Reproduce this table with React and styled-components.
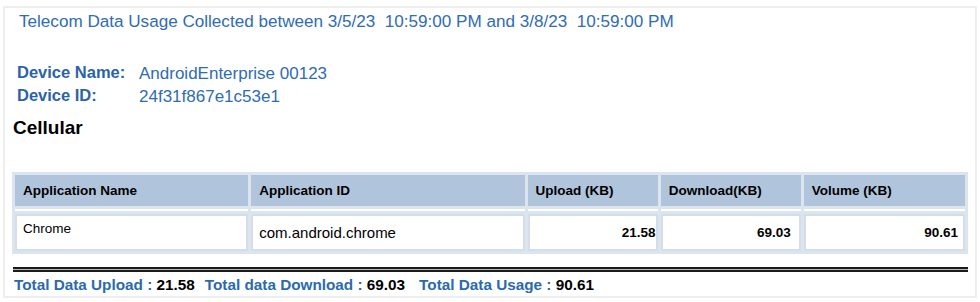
import React from "react";
import styled, { createGlobalStyle } from "styled-components";

const GlobalStyle = createGlobalStyle`
  body {
    margin: 0;
    background: #ffffff;
    font-family: "Liberation Sans", Arial, sans-serif;
  }
`;

const Frame = styled.div`
  margin: 6px 0 0 3px;
  width: 970px;
  height: 288px;
  border: 2px solid #eeeeee;
  display: flex;
  flex-direction: column;
`;

const Title = styled.div`
  padding: 4px 0 0 14px;
  font-size: 17.1px;
  line-height: 20px;
  color: #2e6cb3;
  white-space: pre;
`;

const InfoGrid = styled.div`
  margin: 30px 0 0 12px;
  display: grid;
  grid-template-columns: 122px auto;
  row-gap: 1px;
`;

const Label = styled.div`
  padding-bottom: 2px;
  font-size: 16.5px;
  font-weight: bold;
  line-height: 20px;
  color: #2b63a8;
`;

const Value = styled.div`
  padding-top: 2px;
  font-size: 17px;
  line-height: 20px;
  color: #2e6cb3;
`;

const Section = styled.div`
  margin: 10px 0 0 8px;
  font-size: 19px;
  font-weight: bold;
  line-height: 22px;
  color: #000000;
`;

const Table = styled.table`
  margin: 33px 0 0 7px;
  width: 956px;
  border-collapse: separate;
  border-spacing: 3px;
  background: #dce4ee;
  table-layout: fixed;
`;

const HeadCell = styled.th`
  height: 31px;
  padding: 0 0 0 8px;
  background: #b0c4dc;
  font-size: 13.5px;
  font-weight: bold;
  color: #000000;
  text-align: left;
`;

const Spacer = styled.td`
  height: 2px;
  padding: 0;
  background: #ffffff;
`;

const BodyRow = styled.tr`
  height: 37px;
`;

const Cell = styled.td`
  padding: ${(p) => (p.$top ? "5px 8px 0 6px" : `0 ${p.$pad ?? 8}px 0 6px`)};
  background: #ffffff;
  border: 2px solid #d3deea;
  color: #000000;
  font-size: ${(p) => p.$size || 13.5}px;
  font-weight: ${(p) => (p.$num ? "bold" : "normal")};
  text-align: ${(p) => (p.$num ? "right" : "left")};
  vertical-align: ${(p) => (p.$top ? "top" : "middle")};
`;

const Rule = styled.div`
  margin: 13px 0 0 8px;
  width: 955px;
  height: 1px;
  background: #b8b8b8;
  border-top: 2px solid #1a1a1a;
  border-bottom: 2px solid #1a1a1a;
`;

const Totals = styled.div`
  margin: 4px 0 0 9px;
  display: flex;
  font-size: 15.3px;
  font-weight: bold;
  line-height: 18px;
  white-space: pre;
  color: #000000;
`;

const TotalItem = styled.span`
  margin-left: ${(p) => p.$gap}px;
`;

const TotalLabel = styled.span`
  color: #2b6aad;
`;

const columns = [
  { title: "Application Name", width: 233 },
  { title: "Application ID", width: 273 },
  { title: "Upload (KB)", width: 130 },
  { title: "Download(KB)", width: 140 },
  { title: "Volume (KB)", width: 161 },
];

const totals = [
  { label: "Total Data Upload : ", value: "21.58", gap: 0 },
  { label: "Total data Download : ", value: "69.03", gap: 10 },
  { label: "Total Data Usage : ", value: "90.61", gap: 14 },
];

export default function App() {
  return (
    <>
      <GlobalStyle />
      <Frame>
        <Title>
          Telecom Data Usage Collected between 3/5/23  10:59:00 PM and 3/8/23  10:59:00 PM
        </Title>
        <InfoGrid>
          <Label>Device Name:</Label>
          <Value>AndroidEnterprise 00123</Value>
          <Label>Device ID:</Label>
          <Value>24f31f867e1c53e1</Value>
        </InfoGrid>
        <Section>Cellular</Section>
        <Table>
          <colgroup>
            {columns.map((c) => (
              <col key={c.title} style={{ width: c.width }} />
            ))}
          </colgroup>
          <thead>
            <tr>
              {columns.map((c) => (
                <HeadCell key={c.title}>{c.title}</HeadCell>
              ))}
            </tr>
          </thead>
          <tbody>
            <tr>
              {columns.map((c) => (
                <Spacer key={c.title} />
              ))}
            </tr>
            <BodyRow>
              <Cell $top>Chrome</Cell>
              <Cell $size={15}>com.android.chrome</Cell>
              <Cell $num $pad={0}>21.58</Cell>
              <Cell $num $pad={8}>69.03</Cell>
              <Cell $num $pad={5}>90.61</Cell>
            </BodyRow>
          </tbody>
        </Table>
        <Rule />
        <Totals>
          {totals.map((t) => (
            <TotalItem key={t.label} $gap={t.gap}>
              <TotalLabel>{t.label}</TotalLabel>
              {t.value}
            </TotalItem>
          ))}
        </Totals>
      </Frame>
    </>
  );
}
